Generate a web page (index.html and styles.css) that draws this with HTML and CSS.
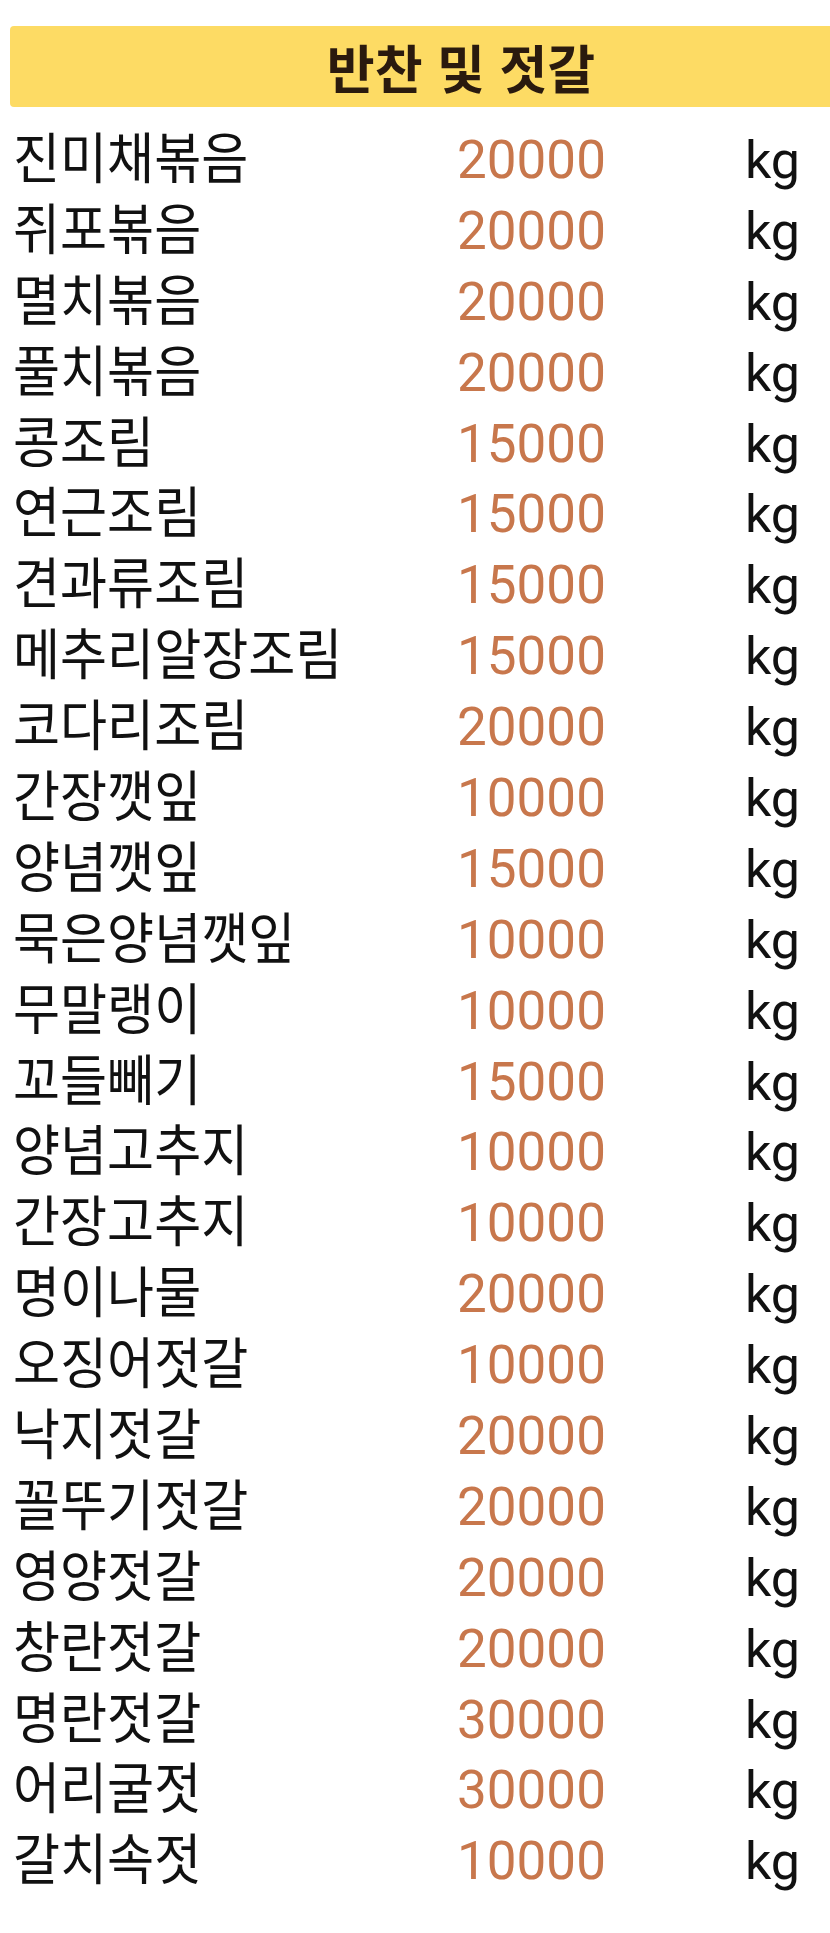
FILE: index.html
```html
<!DOCTYPE html>
<html lang="ko">
<head>
<meta charset="utf-8">
<link rel="stylesheet" href="styles.css">
</head>
<body>
<div class="page">
  <div class="bar"><h1 class="title">반찬 및 젓갈</h1></div>
  <div class="list">
    <div class="row"><span class="name"><span class="sq">진미채볶음</span></span><span class="num">20000</span><span class="unit">kg</span></div>
    <div class="row"><span class="name"><span class="sq">쥐포볶음</span></span><span class="num">20000</span><span class="unit">kg</span></div>
    <div class="row"><span class="name"><span class="sq">멸치볶음</span></span><span class="num">20000</span><span class="unit">kg</span></div>
    <div class="row"><span class="name"><span class="sq">풀치볶음</span></span><span class="num">20000</span><span class="unit">kg</span></div>
    <div class="row"><span class="name"><span class="sq">콩조림</span></span><span class="num">15000</span><span class="unit">kg</span></div>
    <div class="row"><span class="name"><span class="sq">연근조림</span></span><span class="num">15000</span><span class="unit">kg</span></div>
    <div class="row"><span class="name"><span class="sq">견과류조림</span></span><span class="num">15000</span><span class="unit">kg</span></div>
    <div class="row"><span class="name"><span class="sq">메추리알장조림</span></span><span class="num">15000</span><span class="unit">kg</span></div>
    <div class="row"><span class="name"><span class="sq">코다리조림</span></span><span class="num">20000</span><span class="unit">kg</span></div>
    <div class="row"><span class="name"><span class="sq">간장깻잎</span></span><span class="num">10000</span><span class="unit">kg</span></div>
    <div class="row"><span class="name"><span class="sq">양념깻잎</span></span><span class="num">15000</span><span class="unit">kg</span></div>
    <div class="row"><span class="name"><span class="sq">묵은양념깻잎</span></span><span class="num">10000</span><span class="unit">kg</span></div>
    <div class="row"><span class="name"><span class="sq">무말랭이</span></span><span class="num">10000</span><span class="unit">kg</span></div>
    <div class="row"><span class="name"><span class="sq">꼬들빼기</span></span><span class="num">15000</span><span class="unit">kg</span></div>
    <div class="row"><span class="name"><span class="sq">양념고추지</span></span><span class="num">10000</span><span class="unit">kg</span></div>
    <div class="row"><span class="name"><span class="sq">간장고추지</span></span><span class="num">10000</span><span class="unit">kg</span></div>
    <div class="row"><span class="name"><span class="sq">명이나물</span></span><span class="num">20000</span><span class="unit">kg</span></div>
    <div class="row"><span class="name"><span class="sq">오징어젓갈</span></span><span class="num">10000</span><span class="unit">kg</span></div>
    <div class="row"><span class="name"><span class="sq">낙지젓갈</span></span><span class="num">20000</span><span class="unit">kg</span></div>
    <div class="row"><span class="name"><span class="sq">꼴뚜기젓갈</span></span><span class="num">20000</span><span class="unit">kg</span></div>
    <div class="row"><span class="name"><span class="sq">영양젓갈</span></span><span class="num">20000</span><span class="unit">kg</span></div>
    <div class="row"><span class="name"><span class="sq">창란젓갈</span></span><span class="num">20000</span><span class="unit">kg</span></div>
    <div class="row"><span class="name"><span class="sq">명란젓갈</span></span><span class="num">30000</span><span class="unit">kg</span></div>
    <div class="row"><span class="name"><span class="sq">어리굴젓</span></span><span class="num">30000</span><span class="unit">kg</span></div>
    <div class="row"><span class="name"><span class="sq">갈치속젓</span></span><span class="num">10000</span><span class="unit">kg</span></div>
  </div>
</div>
</body>
</html>
```
FILE: styles.css
```css
html, body {
  margin: 0;
  padding: 0;
  background: #ffffff;
}
body {
  width: 830px;
  overflow: hidden;
  font-family: "Noto Sans CJK KR", "Noto Sans", sans-serif;
  color: #111111;
}
.page {
  padding-top: 26px;
}
.bar {
  margin-left: 10px;
  height: 81px;
  background: #fddb64;
  border-radius: 4px 0 0 4px;
  display: flex;
  align-items: center;
  justify-content: center;
  padding-left: 82px;
}
.title {
  margin: 0;
  font-size: 52px;
  font-weight: 700;
  color: #2a1a0e;
  line-height: 1.1;
  white-space: nowrap;
}
.list {
  padding-top: 16px;
  padding-left: 13px;
}
.row {
  display: grid;
  grid-template-columns: 444px 288px auto;
  align-items: baseline;
  height: 70.9px;
  line-height: 62px;
}
.name {
  font-size: 55px;
  font-weight: 400;
  white-space: nowrap;
}
.name .sq {
  display: inline-block;
  transform: scaleX(0.93);
  transform-origin: left center;
}
.num {
  font-family: Roboto, "Liberation Sans", sans-serif;
  font-size: 53px;
  color: #c8774c;
}
.unit {
  font-family: Roboto, "Liberation Sans", sans-serif;
  font-size: 52px;
  color: #111111;
}
```
